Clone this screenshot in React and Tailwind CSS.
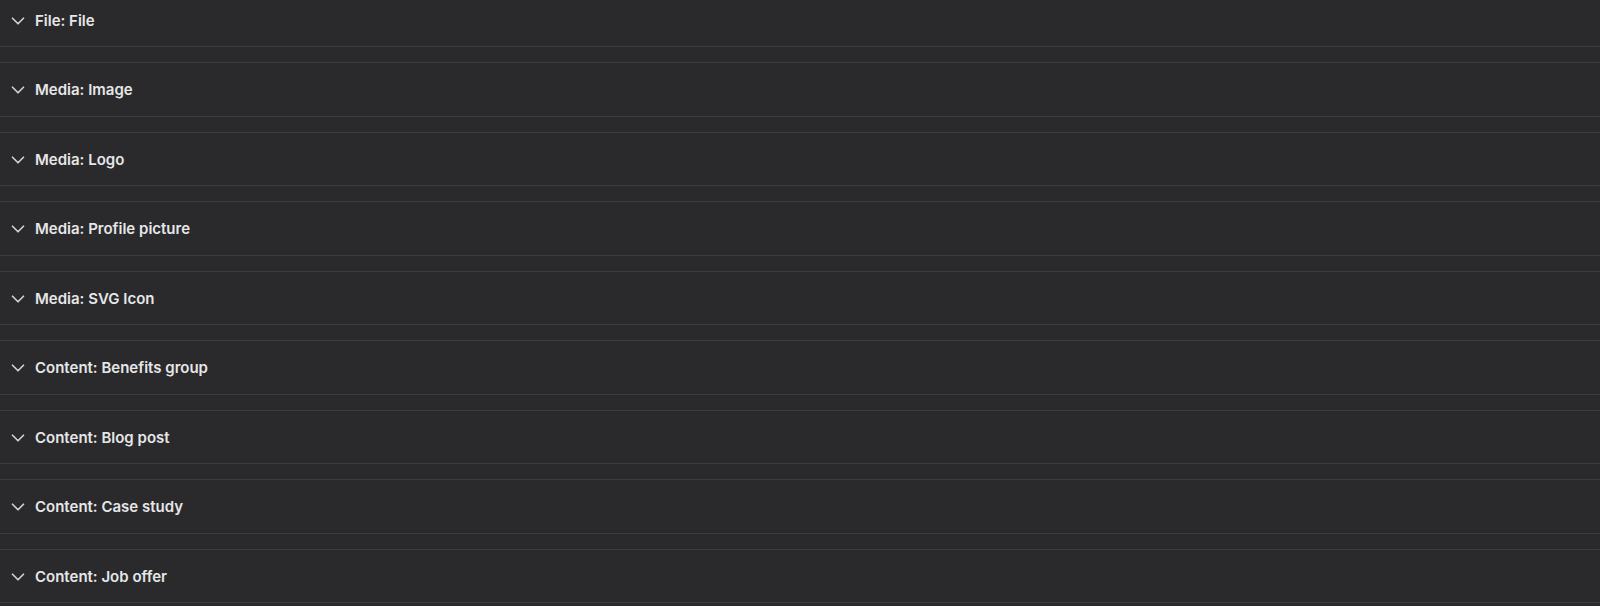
import { ChevronDown } from 'lucide-react';

const sections = [
  'File: File',
  'Media: Image',
  'Media: Logo',
  'Media: Profile picture',
  'Media: SVG Icon',
  'Content: Benefits group',
  'Content: Blog post',
  'Content: Case study',
  'Content: Job offer',
];

function SectionRow({ title }) {
  return (
    <div className="flex h-[54.5px] shrink-0 items-center gap-[6px] border-y border-[#3d3d40] px-[7px] pt-[2px]">
      <ChevronDown size={22} strokeWidth={1.8} className="text-[#d4d4d6]" />
      <span className="text-[15px] font-semibold text-[#e6e6e8]">
        {title}
      </span>
    </div>
  );
}

export default function App() {
  return (
    <div
      className="h-[606px] overflow-hidden bg-[#2a2a2c]"
      style={{ fontFamily: 'Inter, "Noto Sans", sans-serif' }}
    >
      <div className="-mt-[7.5px] flex flex-col gap-[15px]">
        {sections.map((title) => (
          <SectionRow key={title} title={title} />
        ))}
      </div>
    </div>
  );
}
